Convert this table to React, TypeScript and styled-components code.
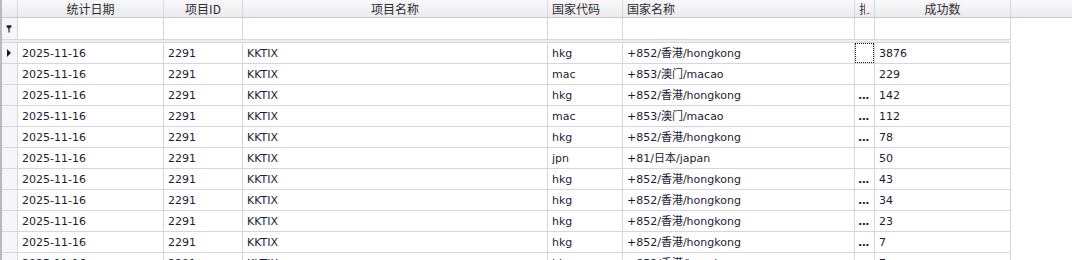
import styled, { createGlobalStyle } from 'styled-components';

const GRID_LINE = '#d6d6de';

const COLUMNS = [
  { key: 'date', title: '统计日期', width: 146, align: 'center' },
  { key: 'id', title: '项目ID', width: 79, align: 'center' },
  { key: 'name', title: '项目名称', width: 305, align: 'center' },
  { key: 'code', title: '国家代码', width: 75, align: 'left' },
  { key: 'country', title: '国家名称', width: 232, align: 'left' },
  { key: 'fee', title: '扣量', width: 20, align: 'left' },
  { key: 'count', title: '成功数', width: 136, align: 'center' },
];

interface IRow {
  code: string;
  country: string;
  fee: string;
  count: number;
}

const ROWS: IRow[] = [
  { code: 'hkg', country: '+852/香港/hongkong', fee: '', count: 3876 },
  { code: 'mac', country: '+853/澳门/macao', fee: '', count: 229 },
  { code: 'hkg', country: '+852/香港/hongkong', fee: '...', count: 142 },
  { code: 'mac', country: '+853/澳门/macao', fee: '...', count: 112 },
  { code: 'hkg', country: '+852/香港/hongkong', fee: '...', count: 78 },
  { code: 'jpn', country: '+81/日本/japan', fee: '', count: 50 },
  { code: 'hkg', country: '+852/香港/hongkong', fee: '...', count: 43 },
  { code: 'hkg', country: '+852/香港/hongkong', fee: '...', count: 34 },
  { code: 'hkg', country: '+852/香港/hongkong', fee: '...', count: 23 },
  { code: 'hkg', country: '+852/香港/hongkong', fee: '...', count: 7 },
  { code: 'hkg', country: '+852/香港/hongkong', fee: '...', count: 7 },
];

const GlobalStyle = createGlobalStyle`
  html, body {
    margin: 0;
    padding: 0;
    background: #ffffff;
  }
  body {
    font-family: 'DejaVu Sans', 'Noto Sans CJK SC', sans-serif;
  }
`;

const FilterIcon = () => (
  <svg width="6" height="8" viewBox="0 0 6 8">
    <path d="M0.5 1 Q0.5 0.3 1.2 0.3 H4.8 Q5.5 0.3 5.5 1 V2 L3.6 3.6 V7.5 H2.4 V3.6 L0.5 2 Z" fill="#222" />
  </svg>
);

const App = () => {
  return (
    <>
      <GlobalStyle />
      <Grid>
        <HeaderRow>
          <IndicatorHead />
          {COLUMNS.map((col) => (
            <HeaderCell key={col.key} $w={col.width} $align={col.align}>
              {col.key === 'fee' ? (
                <>
                  <Clipped>{col.title}</Clipped>
                  <Dots>..</Dots>
                </>
              ) : (
                col.title
              )}
            </HeaderCell>
          ))}
          <HeaderFiller />
        </HeaderRow>

        <FilterRow>
          <Indicator>
            <FilterIcon />
          </Indicator>
          {COLUMNS.map((col) => (
            <Cell key={col.key} $w={col.width} />
          ))}
        </FilterRow>
        <Separator />

        {ROWS.map((row, i) => (
          <DataRow key={i}>
            <Indicator>{i === 0 && <Arrow />}</Indicator>
            <Cell $w={146}>2025-11-16</Cell>
            <Cell $w={79}>2291</Cell>
            <Cell $w={305}>KKTIX</Cell>
            <Cell $w={75}>{row.code}</Cell>
            <Cell $w={232}>{row.country}</Cell>
            <Cell $w={20} $focused={i === 0} $tight>
              {row.fee}
            </Cell>
            <Cell $w={136}>{row.count}</Cell>
          </DataRow>
        ))}
      </Grid>
    </>
  );
};

const Grid = styled.div`
  width: 1072px;
  height: 260px;
  overflow: hidden;
  box-sizing: border-box;
  border-left: 2px solid #b9b9c2;
  background: #ffffff;
  font-size: 11px;
  color: #1c1c34;
`;

const HeaderRow = styled.div`
  display: flex;
  height: 18px;
  box-sizing: border-box;
  border-bottom: 1px solid #c9c9d1;
  background: linear-gradient(#f8f8fa, #ececf0);
`;

const IndicatorHead = styled.div`
  width: 16px;
  flex: none;
  box-sizing: border-box;
  border-right: 1px solid ${GRID_LINE};
`;

const HeaderCell = styled.div<{ $w: number; $align: string }>`
  width: ${(p) => p.$w}px;
  flex: none;
  box-sizing: border-box;
  border-right: 1px solid ${GRID_LINE};
  padding: 0 4px;
  display: flex;
  align-items: center;
  justify-content: ${(p) => (p.$align === 'center' ? 'center' : 'flex-start')};
  font-family: 'Noto Sans CJK SC', 'DejaVu Sans', sans-serif;
  font-size: 12px;
  line-height: 17px;
  color: #2c2c30;
  white-space: nowrap;
  overflow: hidden;
`;

const Clipped = styled.span`
  display: inline-block;
  width: 6px;
  overflow: hidden;
  flex: none;
`;

const Dots = styled.span`
  font-size: 9px;
  color: #8a5a2a;
  letter-spacing: -1px;
  padding: 3px 0 0 1px;
`;

const HeaderFiller = styled.div`
  flex: 1;
`;

const FilterRow = styled.div`
  display: flex;
  width: 1009px;
  height: 22px;
  box-sizing: border-box;
  border-bottom: 1px solid ${GRID_LINE};
`;

const Separator = styled.div`
  width: 1009px;
  height: 3px;
  box-sizing: border-box;
  background: #eeeef2;
  border-bottom: 1px solid ${GRID_LINE};
`;

const DataRow = styled.div`
  display: flex;
  width: 1009px;
  height: 21px;
  flex: none;
  box-sizing: border-box;
  border-bottom: 1px solid ${GRID_LINE};
`;

const Indicator = styled.div`
  width: 16px;
  flex: none;
  box-sizing: border-box;
  border-right: 1px solid ${GRID_LINE};
  background: #f6f6f8;
  display: flex;
  align-items: center;
  justify-content: center;
  padding-right: 2px;
`;

const Arrow = styled.div`
  width: 0;
  height: 0;
  border-left: 4px solid #1a1a1a;
  border-top: 4px solid transparent;
  border-bottom: 4px solid transparent;
`;

const Cell = styled.div<{ $w: number; $focused?: boolean; $tight?: boolean }>`
  position: relative;
  width: ${(p) => p.$w}px;
  flex: none;
  box-sizing: border-box;
  border-right: 1px solid ${GRID_LINE};
  padding: 2px ${(p) => (p.$tight ? '0 0 3px' : '4px 0')};
  line-height: 18px;
  white-space: nowrap;
  overflow: hidden;
  font-weight: ${(p) => (p.$tight ? 'bold' : 'normal')};
  letter-spacing: ${(p) => (p.$tight ? '-0.5px' : '0')};

  &::after {
    content: '';
    display: ${(p) => (p.$focused ? 'block' : 'none')};
    position: absolute;
    inset: 0;
    border: 1px dotted #1a1a1a;
  }
`;

export default App;
